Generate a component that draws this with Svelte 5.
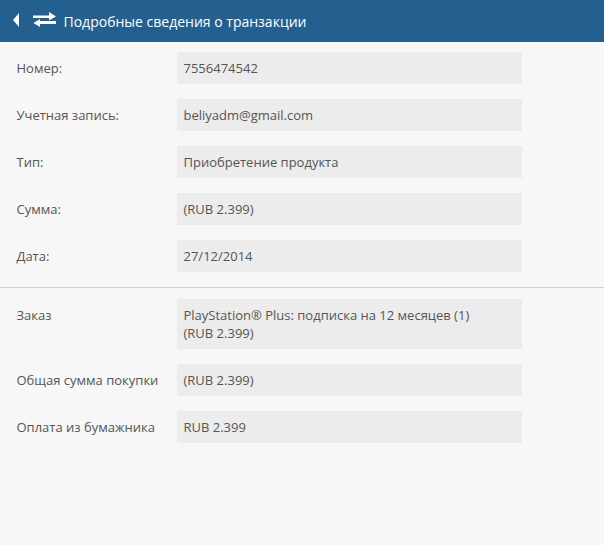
<script>
  const top = [
    ['Номер:', '7556474542'],
    ['Учетная запись:', 'beliyadm@gmail.com'],
    ['Тип:', 'Приобретение продукта'],
    ['Сумма:', '(RUB 2.399)'],
    ['Дата:', '27/12/2014']
  ];
  const bottom = [
    ['Заказ', ['PlayStation® Plus: подписка на 12 месяцев (1)', '(RUB 2.399)']],
    ['Общая сумма покупки', ['(RUB 2.399)']],
    ['Оплата из бумажника', ['RUB 2.399']]
  ];
</script>

<div class="page">
  <header class="bar">
    <svg class="back" width="6" height="14" viewBox="0 0 6 14"><path d="M6 0 L0 7 L6 14 Z" fill="#fff"/></svg>
    <svg class="swap" width="23" height="16" viewBox="0 0 23 16">
      <path d="M0 3.5 H16 V0 L23 4.5 L16 8.5 V6 H0 Z" fill="#fff"/>
      <path d="M23 9 H7 V7 L0.5 11 L7 15 V12 H23 Z" fill="#fff"/>
    </svg>
    <h1>Подробные сведения о транзакции</h1>
  </header>

  <section class="list first">
    {#each top as [label, value]}
      <div class="row">
        <div class="label">{label}</div>
        <div class="value">{value}</div>
      </div>
    {/each}
  </section>

  <hr />

  <section class="list">
    {#each bottom as [label, lines]}
      <div class="row">
        <div class="label">{label}</div>
        <div class="value">
          {#each lines as line}<div>{line}</div>{/each}
        </div>
      </div>
    {/each}
  </section>
</div>

<style>
  :global(body) { margin: 0; background: #f7f7f7; }
  .page {
    width: 604px;
    height: 545px;
    background: #f7f7f7;
    font-family: "Open Sans", sans-serif;
    font-size: 13px;
    color: #555;
    overflow: hidden;
  }
  .bar {
    height: 42px;
    background: #24608f;
    display: flex;
    align-items: center;
    color: #fff;
  }
  .back { margin: -2px 0 0 13px; }
  .swap { margin: -2px 0 0 14px; }
  h1 {
    margin: 0 0 0 7.5px;
    font-size: 14px;
    font-weight: 400;
  }
  .list {
    display: flex;
    flex-direction: column;
    gap: 15px;
  }
  .first { padding-top: 10px; }
  .row { display: flex; align-items: flex-start; }
  .label {
    width: 177px;
    padding-left: 16.5px;
    box-sizing: border-box;
    line-height: 18px;
    padding-top: 7px;
  }
  .value {
    width: 345px;
    box-sizing: border-box;
    background: #ececec;
    padding: 7px 6.5px;
    line-height: 18px;
  }
  hr {
    border: 0;
    border-top: 1px solid #cfcfcf;
    margin: 15px 0 11px;
  }
</style>
